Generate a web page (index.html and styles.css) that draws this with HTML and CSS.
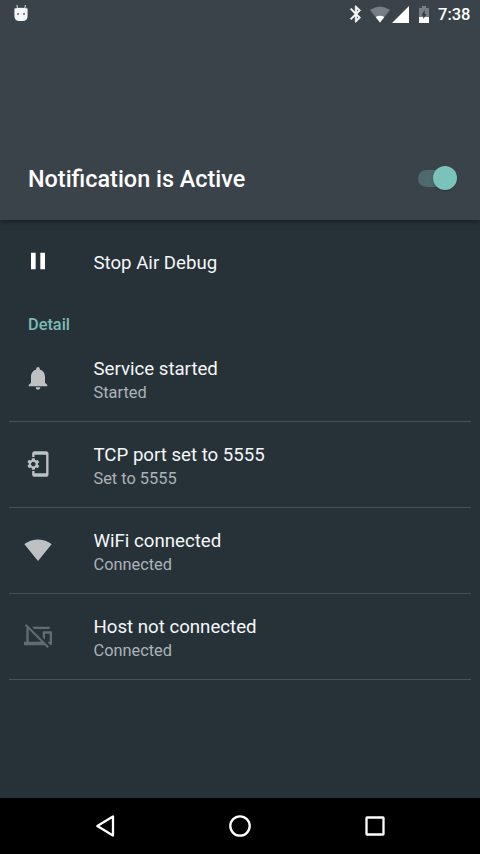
FILE: index.html
```html
<!DOCTYPE html>
<html lang="en">
<head>
<meta charset="utf-8">
<title>Air Debug</title>
<link rel="stylesheet" href="styles.css">
</head>
<body>
<div class="screen">
  <header class="header">
    <div class="status">
      <svg class="android" viewBox="0 0 16 18" width="16" height="18"><path d="M4 1l.6 4M12.4 1l-.6 4" stroke="#d5d9dc" stroke-width="1.1"/><path d="M1.4 4.5Q8 3 14.6 4.5V12q0 5-5 5H6.400q-5 0-5-5z" fill="#f4f6f7"/><circle cx="5" cy="10" r=".9" fill="#4a5259"/><circle cx="11" cy="10" r=".9" fill="#4a5259"/></svg>
      <div class="status-right">
        <svg class="bt" viewBox="0 0 24 24" width="20" height="20"><path fill="#fff" stroke="#fff" stroke-width=".5" d="M17.71 7.71L12 2h-1v7.59L6.41 5 5 6.41 10.59 12 5 17.59 6.41 19 11 14.41V22h1l5.710-5.710-4.300-4.290 4.300-4.290zM13 5.83l1.880 1.880L13 9.590V5.830zm1.880 10.460L13 18.170v-3.760l1.880 1.880z"/></svg>
        <svg class="wifi-s" viewBox="0 0 20 17" width="20" height="17"><path fill="#777e84" d="M0 4Q10-3 20 4L10 16.5z"/><path fill="#fff" d="M5.6 10.900Q10 8.500 14.400 10.900L10 16.5z"/></svg>
        <svg class="signal" viewBox="0 0 17 17" width="17" height="17"><path fill="#fff" d="M0 17L17 0v17z"/></svg>
        <svg class="battery" viewBox="0 0 12 17" width="12" height="17"><path fill="#777e84" d="M4 0h4v2h3v9H1V2h3z"/><path fill="#fff" d="M1 11h10v6H1z"/><path fill="#343c43" d="M6.700 4v4h2L5.200 13V9.500H3.400z"/></svg>
        <span class="clock">7:38</span>
      </div>
    </div>
    <div class="title-bar">
      <h1>Notification is Active</h1>
      <div class="switch"><div class="thumb"></div></div>
    </div>
  </header>
  <main class="content">
    <div class="row action">
      <svg class="icon" viewBox="0 0 24 24"><path fill="#fff" d="M6 19h4V5H6v14zm8-14v14h4V5h-4z"/></svg>
      <div class="name">Stop Air Debug</div>
    </div>
    <h2>Detail</h2>
    <div class="row item">
      <svg class="icon" viewBox="0 0 24 24"><path fill="#bdc1c4" d="M12 22c1.1 0 2-.9 2-2h-4c0 1.1.89 2 2 2zm6-6v-5c0-3.07-1.64-5.64-4.5-6.32V4c0-.83-.67-1.5-1.5-1.5s-1.5.67-1.5 1.5v.68C7.63 5.36 6 7.92 6 11v5l-2 2v1h16v-1l-2-2z"/></svg>
      <div><div class="name">Service started</div><div class="sub">Started</div></div>
    </div>
    <div class="row item">
      <svg class="icon" viewBox="0 0 24 24"><path fill="#bdc1c4" d="M11.8 12.5v-1l1.1-.8c.1-.1.1-.2.1-.3l-1-1.7c-.1-.1-.2-.2-.3-.1l-1.3.4c-.3-.2-.6-.4-.9-.5l-.2-1.3c0-.1-.1-.2-.3-.2H7c-.1 0-.2.1-.3.2l-.2 1.3c-.3.1-.6.3-.9.5l-1.3-.5c-.1 0-.2 0-.3.1l-1 1.7c-.1.1 0 .2.1.3l1.1.8v1l-1.1.9c-.1.1-.1.2-.1.3l1 1.7c.1.1.2.2.3.1l1.4-.4c.3.2.6.4.9.5l.2 1.3c0 .1.1.2.2.2h2c.1 0 .2-.1.3-.2l.2-1.3c.3-.1.6-.3.9-.5l1.3.5c.1 0 .2 0 .3-.1l1-1.7c.1-.1 0-.2-.1-.3l-1.1-.9zM8 14c-1.1 0-2-.9-2-2s.9-2 2-2 2 .9 2 2-.9 2-2 2zM19 1H9c-1.1 0-2 .9-2 2v3h2V4h10v16H9v-2H7v3c0 1.1.9 2 2 2h10c1.1 0 2-.9 2-2V3c0-1.1-.9-2-2-2z"/></svg>
      <div><div class="name">TCP port set to 5555</div><div class="sub">Set to 5555</div></div>
    </div>
    <div class="row item">
      <svg class="icon" viewBox="0 0 24 24"><path fill="#bdc1c4" d="M12.01 21.49L23.64 7c-.45-.34-4.93-4-11.64-4C5.28 3 .81 6.66.36 7l11.63 14.49.01.01.01-.01z"/></svg>
      <div><div class="name">WiFi connected</div><div class="sub">Connected</div></div>
    </div>
    <div class="row item">
      <svg class="icon" viewBox="0 0 24 24"><path fill="#626b70" d="M22 6V4H6.82l2 2H22zM1.92 1.65L.65 2.92l1.82 1.82C2.18 5.08 2 5.52 2 6v11H0v3h17.73l2.35 2.35 1.27-1.27L3.89 3.62 1.92 1.65zM4 6.27L14.73 17H4V6.27zM23 8h-6c-.55 0-1 .45-1 1v4.18l2 2V10h4v7h-2.18l3 3H23c.55 0 1-.45 1-1V9c0-.55-.45-1-1-1z"/></svg>
      <div><div class="name">Host not connected</div><div class="sub">Connected</div></div>
    </div>
  </main>
  <nav class="nav">
    <svg viewBox="0 0 28 28"><path d="M6.300 14L22 4.500v19z"/></svg>
    <svg viewBox="0 0 28 28"><circle cx="14" cy="14" r="9.700"/></svg>
    <svg viewBox="0 0 28 28"><rect x="5.500" y="5.500" width="17" height="17" rx=".5"/></svg>
  </nav>
</div>
</body>
</html>
```

FILE: styles.css
```css
* { box-sizing: border-box; }
body { margin: 0; font-family: Roboto, "Liberation Sans", sans-serif; background: #273238; }
svg { display: block; flex: none; }
.screen { width: 480px; height: 854px; display: flex; flex-direction: column; overflow: hidden; background: #273238; }
.header { height: 220px; flex: none; display: flex; flex-direction: column; justify-content: space-between; background: #3b434a; box-shadow: 0 1px 6px rgba(0, 0, 0, .5); z-index: 1; }
.status { height: 28px; padding: 0 9px 0 13px; display: flex; align-items: center; justify-content: space-between; }
.android { margin-bottom: 2px; }
.status-right { display: flex; align-items: center; }
.wifi-s { margin-left: 4px; }
.signal { margin-left: 2px; }
.battery { margin-left: 9px; }
.clock { margin-left: 8px; width: 33px; font-size: 16.5px; line-height: 28px; padding-top: 1px; color: #fff; font-weight: 500; white-space: nowrap; }
.title-bar { height: 84px; padding: 0 23px 0 28px; display: flex; align-items: center; justify-content: space-between; }
h1 { margin: 2px 0 0; font-size: 23.4px; line-height: 28px; font-weight: 500; color: #fff; }
.switch { width: 39px; height: 17px; border-radius: 9px; background: #4e6a6e; display: flex; align-items: center; justify-content: flex-end; }
.thumb { width: 24px; height: 24px; border-radius: 50%; background: #79c3bb; box-shadow: 0 1px 2px rgba(0, 0, 0, .3); flex: none; }
.content { flex: 1; padding: 13px 9px 0; }
.row { display: flex; align-items: center; padding-left: 14.5px; }
.icon { width: 28px; height: 28px; margin-right: 42px; }
.action { height: 56px; }
.name { font-size: 18.65px; line-height: 24px; color: #f5f7f8; }
.action .name { margin-top: 3px; }
h2 { margin: 0; padding: 21px 0 0 19px; height: 47px; font-size: 16.35px; line-height: 30px; font-weight: 500; color: #79bdb6; }
.item { height: 86px; border-bottom: 1px solid #46525a; }
.item .icon { margin-bottom: 1px; }
.item .name { margin-top: 3px; }
.sub { font-size: 16.35px; line-height: 23px; color: #acb3b8; }
.nav { height: 56px; flex: none; background: #000; display: flex; justify-content: center; align-items: center; gap: 107px; }
.nav svg { width: 28px; height: 28px; fill: none; stroke: #fff; stroke-width: 2.3; stroke-linejoin: round; }
```
